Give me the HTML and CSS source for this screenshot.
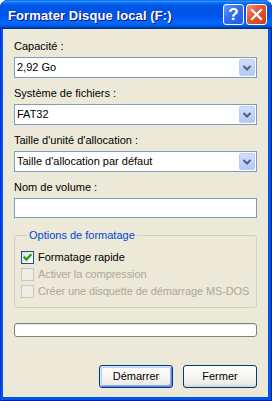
FILE: index.html
```html
<!DOCTYPE html>
<html>
	<head>
		<meta charset="UTF-8">
		<title>Formater Disque local (F:)</title>
		<link rel="stylesheet" href="styles.css">
	</head>
	<body>
		<div class="window">
			<div class="title-bar">
				<span class="title">Formater Disque local (F:)</span>
				<div class="controls">
					<span class="ctl help">?</span>
					<span class="ctl close">
						<svg width="19" height="19" viewBox="0 0 19 19"><path d="M5 5 L14 14 M14 5 L5 14" stroke="#fff" stroke-width="2.2" stroke-linecap="square"/></svg>
					</span>
				</div>
			</div>
			<div class="body">
				<div class="label">Capacité :</div>
				<div class="combo">
					<span class="value">2,92 Go</span>
					<span class="drop"><svg width="14" height="15" viewBox="0 0 14 15"><path d="M3.5 6 L7 9.5 L10.5 6" fill="none" stroke="#4D6185" stroke-width="2"/></svg></span>
				</div>

				<div class="label">Système de fichiers :</div>
				<div class="combo">
					<span class="value">FAT32</span>
					<span class="drop"><svg width="14" height="15" viewBox="0 0 14 15"><path d="M3.5 6 L7 9.5 L10.5 6" fill="none" stroke="#4D6185" stroke-width="2"/></svg></span>
				</div>

				<div class="label">Taille d'unité d'allocation :</div>
				<div class="combo">
					<span class="value">Taille d'allocation par défaut</span>
					<span class="drop"><svg width="14" height="15" viewBox="0 0 14 15"><path d="M3.5 6 L7 9.5 L10.5 6" fill="none" stroke="#4D6185" stroke-width="2"/></svg></span>
				</div>

				<div class="label">Nom de volume :</div>
				<div class="textbox"></div>

				<fieldset class="options">
					<legend>Options de formatage</legend>
					<div class="check">
						<span class="box checked"><svg width="11" height="11" viewBox="0 0 11 11"><path d="M1.8 4.8 L4.3 7.6 L9.4 2.2" fill="none" stroke="#21A121" stroke-width="2.4"/></svg></span>
						<span>Formatage rapide</span>
					</div>
					<div class="check disabled">
						<span class="box"></span>
						<span>Activer la compression</span>
					</div>
					<div class="check disabled">
						<span class="box"></span>
						<span>Créer une disquette de démarrage MS-DOS</span>
					</div>
				</fieldset>

				<div class="progress"></div>

				<div class="actions">
					<span class="btn default">Démarrer</span>
					<span class="btn">Fermer</span>
				</div>
			</div>
		</div>
	</body>
</html>
```

FILE: styles.css
```css
*{
	margin: 0;
	padding: 0;
	box-sizing: border-box;
}
body{
	font-family: "Liberation Sans", Arial, sans-serif;
	font-size: 11px;
	line-height: 13px;
	color: #000;
}
.window{
	width: 272px;
	height: 401px;
	display: flex;
	flex-direction: column;
	background: #0055EA;
	border-radius: 8px 8px 0 0;
	box-shadow: inset 1px 0 #0831D9, inset -1px 0 #001EA0, inset 0 -1px #001EA0;
	overflow: hidden;
}
.title-bar{
	height: 29px;
	display: flex;
	align-items: center;
	justify-content: space-between;
	padding: 2px 5px 0 8px;
	background: linear-gradient(180deg, #0058EE 0%, #3593FF 4%, #288EFF 6%, #127DFF 8%, #036FFC 10%, #0262EE 14%, #0057E5 20%, #0054E3 24%, #0055EB 56%, #005BF5 66%, #026AFE 76%, #0062EF 86%, #0052D6 92%, #0040AB 94%, #003092 100%);
}
.title{
	color: #fff;
	font-weight: bold;
	font-size: 13px;
	letter-spacing: 0.1px;
	text-shadow: 1px 1px #0F1089;
}
.controls{
	display: flex;
	gap: 2px;
	margin-top: -2px;
}
.ctl{
	width: 21px;
	height: 21px;
	border: 1px solid #fff;
	border-radius: 3px;
	display: flex;
	align-items: center;
	justify-content: center;
}
.help{
	background: linear-gradient(135deg, #6A9CFA 0%, #3671F0 40%, #2558E3 100%);
	color: #fff;
	font-weight: bold;
	font-size: 17px;
}
.close{
	background: linear-gradient(135deg, #F0957A 0%, #E25A34 40%, #CC3F18 100%);
}
.body{
	flex: 1;
	margin: 0 4px 4px 3px;
	background: #ECE9D8;
	padding: 11px 11px 0 11px;
}
.label{
	margin-bottom: 4px;
}
.combo{
	height: 21px;
	border: 1px solid #7F9DB9;
	background: #fff;
	display: flex;
	align-items: center;
	justify-content: space-between;
	padding: 0 1px 0 2px;
	margin-bottom: 9px;
}
.drop{
	width: 16px;
	height: 17px;
	border: 1px solid #BACCF7;
	border-radius: 2px;
	background: linear-gradient(180deg, #D2DEFC 0%, #BED0FA 60%, #B4C8F6 100%);
	display: flex;
	align-items: center;
	justify-content: center;
}
.textbox{
	height: 20px;
	border: 1px solid #7F9DB9;
	background: #fff;
}
.options{
	margin-top: 11px;
	border: 1px solid #D0D0BF;
	border-radius: 3px;
	padding: 7px 0 7px 6px;
}
.options legend{
	color: #0046D5;
	margin-left: 6px;
	padding: 0 2px;
}
.check{
	height: 17px;
	display: flex;
	align-items: center;
	gap: 4px;
}
.box{
	width: 13px;
	height: 13px;
	border: 1px solid #1C5180;
	background: linear-gradient(135deg, #DCDCD7 0%, #FFFFFF 100%);
	display: flex;
	align-items: center;
	justify-content: center;
}
.disabled{
	color: #ACA899;
	letter-spacing: -0.1px;
}
.disabled .box{
	border-color: #CAC8BB;
	background: #F0EEE4;
}
.progress{
	margin-top: 15px;
	height: 14px;
	border: 1px solid #808080;
	border-radius: 3px;
	background: #fff;
	box-shadow: inset 0 1px #E8E8E8;
}
.actions{
	margin-top: 28px;
	display: flex;
	justify-content: flex-end;
	gap: 10px;
}
.btn{
	width: 74px;
	height: 23px;
	border: 1px solid #003C74;
	border-radius: 3px;
	background: linear-gradient(180deg, #FFFFFF 0%, #F4F3EE 60%, #ECEBE6 86%, #D6D0C5 100%);
	display: flex;
	align-items: center;
	justify-content: center;
}
.default{
	box-shadow: inset 1px 1px #CEE7FF, inset -1px -1px #6982EE, inset 2px 2px #BCD4F6, inset -2px -2px #89ADE4;
}
```
